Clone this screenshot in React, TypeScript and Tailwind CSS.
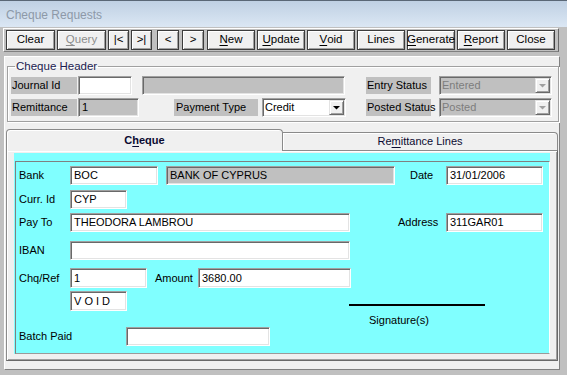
import React from 'react';

// sunken edit box look
const sunken =
  'border border-t-[#a0a0a0] border-l-[#a0a0a0] border-b-white border-r-white shadow-[inset_1px_1px_0_#696969,inset_-1px_-1px_0_#e3e3e3]';
const raised =
  'border border-t-[#e3e3e3] border-l-[#e3e3e3] border-b-[#696969] border-r-[#696969] shadow-[inset_1px_1px_0_#fff,inset_-1px_-1px_0_#a0a0a0]';

interface FieldProps {
  w: string;
  value?: string;
  gray?: boolean;
  h?: string;
  className?: string;
}

const Field: React.FC<FieldProps> = ({ w, value = '', gray = false, h = 'h-[19px]', className = '' }) => (
  <div
    className={`${w} ${h} ${sunken} ${gray ? 'bg-[#c0c0c0]' : 'bg-white'} flex items-center pl-[3px] whitespace-nowrap overflow-hidden ${className}`}
  >
    {value}
  </div>
);

const Arrow: React.FC<{ color: string }> = ({ color }) => (
  <svg width="7" height="4" viewBox="0 0 7 4">
    <polygon points="0,0 7,0 3.5,3.5" fill={color} />
  </svg>
);

const Combo: React.FC<{ w: string; value: string; disabled?: boolean; className?: string }> = ({
  w,
  value,
  disabled = false,
  className = '',
}) => (
  <div
    className={`${w} h-[19px] ${sunken} ${disabled ? 'bg-[#c0c0c0] text-[#7d7d7d]' : 'bg-white text-black'} flex items-center ${className}`}
  >
    <span className="flex-1 pl-[2px] whitespace-nowrap overflow-hidden">{value}</span>
    <div className={`w-[15px] h-[15px] mr-[1px] bg-[#f0f0f0] ${raised} flex items-center justify-center`}>
      <Arrow color={disabled ? '#a0a0a0' : '#000'} />
    </div>
  </div>
);

const GrayLabel: React.FC<{ w: string; children: React.ReactNode; className?: string }> = ({ w, children, className = '' }) => (
  <div className={`${w} h-[17px] bg-[#c0c0c0] flex items-center pl-[1px] whitespace-nowrap ${className}`}>{children}</div>
);

interface ToolButtonProps {
  w: string;
  ml: string;
  children: React.ReactNode;
  disabled?: boolean;
}

const ToolButton: React.FC<ToolButtonProps> = ({ w, ml, children, disabled }) => (
  <button
    className={`${w} ${ml} h-[20px] shrink-0 bg-[#f0f0f0] border border-[#3c3c3c] shadow-[inset_1px_1px_0_#fff,inset_-1px_-1px_0_#a0a0a0] flex items-center justify-center leading-none text-[11.5px] ${
      disabled ? 'text-[#8c8c8c]' : 'text-black'
    }`}
  >
    {children}
  </button>
);

const U: React.FC<{ children: React.ReactNode }> = ({ children }) => (
  <span className="underline underline-offset-[2px]">{children}</span>
);

export default function App() {
  return (
    <div className="w-[567px] h-[375px] overflow-hidden bg-[#c0c0c0] font-['Liberation_Sans',Arial,sans-serif] text-[11px] text-black">
      {/* Title bar */}
      <div className="h-[27px] border-t border-[#5a6776] bg-gradient-to-b from-[#bfd0e3] to-[#dbe7f4] flex items-center pl-[6px] pt-[2px] text-[12px] text-[#8d99a8]">
        Cheque Requests
      </div>

      {/* Toolbar */}
      <div className="mt-[1px] ml-[3px] w-[556px] h-[24px] border border-t-white border-l-white border-b-[#808080] border-r-[#696969] flex items-center pl-[2px]">
        <ToolButton w="w-[49px]" ml="ml-0">Clear</ToolButton>
        <ToolButton w="w-[49px]" ml="ml-[2px]" disabled>
          <U>Q</U>uery
        </ToolButton>
        <ToolButton w="w-[21px]" ml="ml-[2px]">|&lt;</ToolButton>
        <ToolButton w="w-[21px]" ml="ml-[2px]">&gt;|</ToolButton>
        <ToolButton w="w-[22px]" ml="ml-[5px]">&lt;</ToolButton>
        <ToolButton w="w-[22px]" ml="ml-[3px]">&gt;</ToolButton>
        <ToolButton w="w-[48px]" ml="ml-[3px]">
          <U>N</U>ew
        </ToolButton>
        <ToolButton w="w-[48px]" ml="ml-[2px]">
          <U>U</U>pdate
        </ToolButton>
        <ToolButton w="w-[48px]" ml="ml-[2px]">
          <U>V</U>oid
        </ToolButton>
        <ToolButton w="w-[48px]" ml="ml-[2px]">Lines</ToolButton>
        <ToolButton w="w-[48px]" ml="ml-[2px]">
          <U>G</U>enerate
        </ToolButton>
        <ToolButton w="w-[48px]" ml="ml-[2px]">
          <U>R</U>eport
        </ToolButton>
        <ToolButton w="w-[48px]" ml="ml-[2px]">Close</ToolButton>
      </div>

      {/* Main panel */}
      <div className="mt-[4px] ml-[4px] w-[556px] h-[314px] bg-[#f0f0f0] border border-t-white border-l-white border-b-[#808080] border-r-[#808080]">
        {/* Cheque Header group */}
        <fieldset className="mt-[3px] ml-[2px] w-[552px] border border-[#a0a0a0] shadow-[inset_1px_1px_0_#fff,1px_1px_0_#fff] pl-[3px] pb-[4px]">
          <legend className="ml-[4px] px-[1px] leading-[13px] text-[11.5px] text-[#1c1c50]">Cheque Header</legend>
          <div className="mt-[3px] h-[19px] flex items-center">
            <GrayLabel w="w-[66px]">Journal Id</GrayLabel>
            <Field w="w-[54px]" className="ml-[1px]" />
            <Field w="w-[203px]" gray className="ml-[10px]" />
            <GrayLabel w="w-[65px]" className="ml-[21px]">
              Entry Status
            </GrayLabel>
            <Combo w="w-[113px]" value="Entered" disabled className="ml-[8px]" />
          </div>
          <div className="mt-[3px] h-[19px] flex items-center">
            <GrayLabel w="w-[66px]">Remittance</GrayLabel>
            <Field w="w-[61px]" gray value="1" className="ml-[1px]" />
            <GrayLabel w="w-[84px]" className="ml-[35px] pl-[2px]">
              Payment Type
            </GrayLabel>
            <Combo w="w-[84px]" value="Credit" className="ml-[4px]" />
            <GrayLabel w="w-[65px]" className="ml-[20px]">
              Posted Status
            </GrayLabel>
            <Combo w="w-[113px]" value="Posted" disabled className="ml-[8px]" />
          </div>
        </fieldset>

        {/* Tabs */}
        <div className="mt-[7px] ml-[1px] w-[552px]">
          <div className="h-[21px] flex items-end">
            <div className="relative z-10 w-[277px] h-[22px] -mb-[1px] bg-[#f0f0f0] border-t border-l border-r border-[#8a8a8a] rounded-t-[4px] shadow-[inset_1px_1px_0_#fff] flex items-center justify-center font-bold text-[#0a0a30]">
              <span>
                C<U>h</U>eque
              </span>
            </div>
            <div className="w-[275px] h-[18px] bg-[#f0f0f0] border-t border-r border-[#8a8a8a] rounded-tr-[4px] shadow-[inset_1px_1px_0_#fff] flex items-center justify-center text-[#0a0a30]">
              <span>
                Re<U>m</U>ittance Lines
              </span>
            </div>
          </div>
          <div className="h-[211px] border border-t-[#8a8a8a] border-l-[#8a8a8a] border-b-[#696969] border-r-[#696969] shadow-[inset_1px_1px_0_#fff,inset_-1px_-1px_0_#a0a0a0] pl-[7px] pt-[2px]">
            <div className="w-[536px] h-[201px] bg-[#80ffff] pt-[8px] pl-[1px] flex flex-col">
              <div className="flex-1 border border-t-[#808080] border-l-[#808080] border-b-[#9a9a9a] border-r-white pt-[4px]">
                {/* Bank */}
                <div className="h-[19px] flex items-center">
                  <div className="w-[54px] pl-[3px]">Bank</div>
                  <Field w="w-[88px]" value="BOC" />
                  <Field w="w-[229px]" gray value="BANK OF CYPRUS" className="ml-[8px]" />
                  <div className="w-[36px] ml-[15px]">Date</div>
                  <Field w="w-[97px]" value="31/01/2006" />
                </div>
                {/* Currency */}
                <div className="mt-[5px] h-[19px] flex items-center">
                  <div className="w-[54px] pl-[3px]">Curr. Id</div>
                  <Field w="w-[57px]" value="CYP" />
                </div>
                {/* Pay To */}
                <div className="mt-[4px] h-[19px] flex items-center">
                  <div className="w-[54px] pl-[3px]">Pay To</div>
                  <Field w="w-[280px]" value="THEODORA LAMBROU" />
                  <div className="w-[48px] ml-[48px]">Address</div>
                  <Field w="w-[97px]" value="311GAR01" />
                </div>
                {/* IBAN */}
                <div className="mt-[9px] h-[19px] flex items-center">
                  <div className="w-[54px] pl-[3px]">IBAN</div>
                  <Field w="w-[280px]" />
                </div>
                {/* Cheque ref / amount */}
                <div className="mt-[8px] h-[20px] flex items-center">
                  <div className="w-[54px] pl-[3px]">Chq/Ref</div>
                  <Field w="w-[77px]" h="h-[20px]" value="1" />
                  <div className="w-[43px] ml-[8px]">Amount</div>
                  <Field w="w-[153px]" h="h-[20px]" value="3680.00" />
                </div>
                {/* Void, batch, signature */}
                <div className="mt-[3px] flex">
                  <div className="w-[254px]">
                    <div className="pl-[54px]">
                      <Field w="w-[57px]" h="h-[20px]" value="V O I D" />
                    </div>
                    <div className="mt-[16px] h-[19px] flex items-center">
                      <div className="w-[110px] pl-[3px]">Batch Paid</div>
                      <Field w="w-[144px]" />
                    </div>
                  </div>
                  <div className="ml-[79px] pt-[13px]">
                    <div className="w-[136px] h-[2px] bg-black" />
                    <div className="mt-[8px] pl-[20px] leading-[13px]">Signature(s)</div>
                  </div>
                </div>
              </div>
            </div>
          </div>
        </div>
      </div>
    </div>
  );
}
